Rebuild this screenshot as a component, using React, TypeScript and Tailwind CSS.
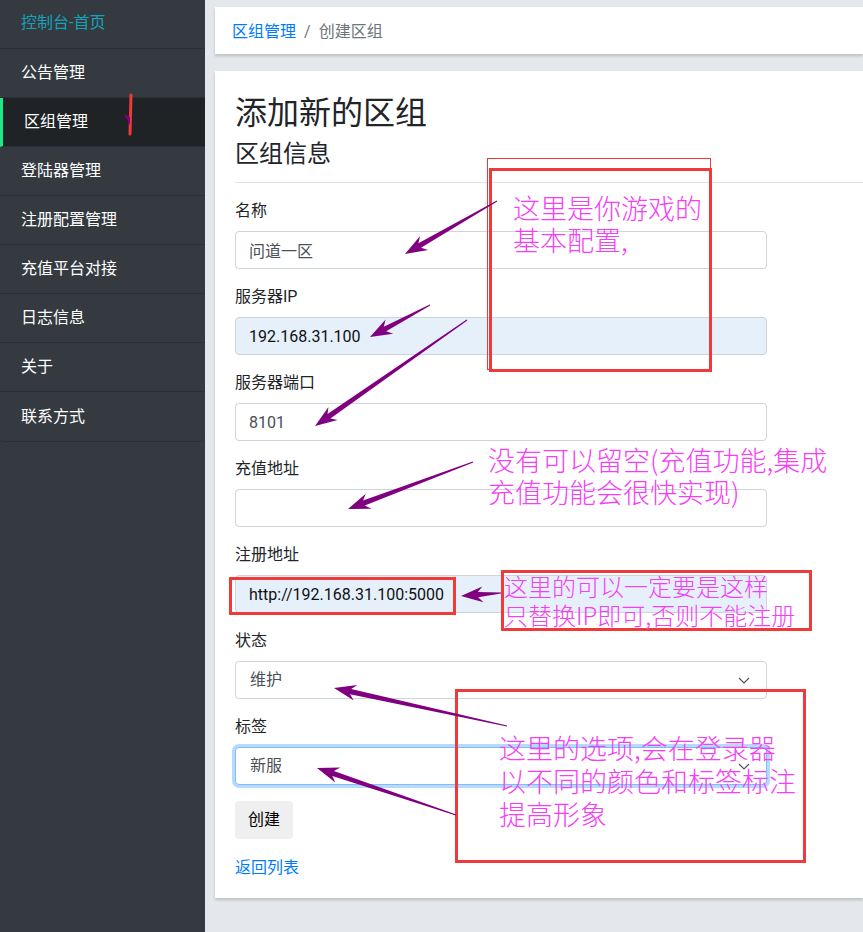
import React from 'react';

const navItems = ['公告管理', '区组管理', '登陆器管理', '注册配置管理', '充值平台对接', '日志信息', '关于', '联系方式'];

type Arrow = [number, number, number, number];

// tapered annotation arrows: tail -> tip
const arrows: Arrow[] = [
  [497, 201, 405, 254],
  [430, 305, 370, 337],
  [467, 320, 315, 426],
  [473, 462, 348, 509],
  [501, 593, 461, 596],
  [507, 726, 334, 688],
  [456, 815, 317, 768],
];

const arrowPoints = ([x1, y1, x2, y2]: Arrow, head = 22, hw = 8, bw = 2.6) => {
  const dx = x2 - x1;
  const dy = y2 - y1;
  const L = Math.hypot(dx, dy);
  const ux = dx / L;
  const uy = dy / L;
  const px = -uy;
  const py = ux;
  const h = Math.min(head, L * 0.6);
  const pt = (u: number, v: number) => `${(x1 + ux * u + px * v).toFixed(1)},${(y1 + uy * u + py * v).toFixed(1)}`;
  return [
    pt(0, 0.5),
    pt(L - h + 5, bw),
    pt(L - h, hw),
    pt(L, 0),
    pt(L - h, -hw),
    pt(L - h + 5, -bw),
    pt(0, -0.5),
  ].join(' ');
};

const Field: React.FC<{ label: string; value?: string; autofill?: boolean; dark?: boolean }> = ({ label, value = '', autofill, dark }) => (
  <div className="mb-4">
    <label className="block text-[16px] leading-[24px] text-[#212529] mb-2">{label}</label>
    <input
      readOnly
      value={value}
      className={`block w-[532px] h-[38px] rounded border border-[#ced4da] px-[13px] text-[16px] outline-none ${
        autofill ? 'bg-[#e5f0fb]' : 'bg-white'
      } ${dark ? 'text-[#111]' : 'text-[#495057]'}`}
    />
  </div>
);

const SelectField: React.FC<{ label: string; value: string; focused?: boolean }> = ({ label, value, focused }) => (
  <div className="mb-4">
    <label className="block text-[16px] leading-[24px] text-[#212529] mb-2">{label}</label>
    <div
      className={`relative flex items-center w-[532px] h-[38px] rounded border px-[14px] text-[16px] text-[#495057] bg-white ${
        focused ? 'border-[#80bdff] shadow-[0_0_0_3px_rgba(0,123,255,0.28)]' : 'border-[#ced4da]'
      }`}
    >
      {value}
      <svg className="absolute right-[16px] top-[15px]" width="12" height="7" viewBox="0 0 12 7">
        <polyline points="1,1 6,6 11,1" fill="none" stroke="#495057" strokeWidth="1.1" />
      </svg>
    </div>
  </div>
);

export default function App() {
  return (
    <div className="relative flex w-[863px] h-[932px] overflow-hidden font-['Segoe_UI','Roboto','Noto_Sans_CJK_SC',sans-serif]">
      {/* sidebar */}
      <aside className="w-[205px] shrink-0 bg-[#343a40]">
        <div className="rounded-b border-b border-[#2b3035]">
          <div className="h-[49px] flex items-center pl-[21px] pb-[3px] border-b border-[#2b3035] text-[16px] text-[#17a2b8]">控制台-首页</div>
          {navItems.map((item) => {
            const active = item === '区组管理';
            return (
              <div
                key={item}
                className={`h-[49px] flex items-center text-[16px] text-white border-b border-[#2b3035] last:border-b-0 ${
                  active ? 'bg-[#1f2326] border-l-[3px] border-l-[#19ec87] pl-[21px]' : 'pl-[21px]'
                }`}
              >
                {item}
              </div>
            );
          })}
        </div>
      </aside>

      {/* main */}
      <main className="flex-1 bg-[#e4e7eb] pl-[10px] pt-[7px]">
        <div className="h-[47px] bg-white flex items-center pl-[17px] pt-[3px] text-[16px] shadow-[0_2px_3px_rgba(0,0,0,0.18)]">
          <span className="text-[#007bff]">区组管理</span>
          <span className="text-[#6c757d] px-[8px]">/</span>
          <span className="text-[#6c757d]">创建区组</span>
        </div>

        <div className="mt-[17px] bg-white pl-[20px] pt-[23px] pb-[18px] shadow-[0_2px_3px_rgba(0,0,0,0.18)]">
          <h1 className="text-[32px] leading-[38px] text-[#212529]">添加新的区组</h1>
          <h2 className="mt-[8px] text-[24px] leading-[29px] text-[#212529]">区组信息</h2>
          <hr className="mt-[13px] mb-[16px] border-0 border-t border-[#e3e3e3]" />

          <Field label="名称" value="问道一区" />
          <Field label="服务器IP" value="192.168.31.100" autofill dark />
          <Field label="服务器端口" value="8101" />
          <Field label="充值地址" />
          <Field label="注册地址" value="http://192.168.31.100:5000" autofill dark />
          <SelectField label="状态" value="维护" />
          <SelectField label="标签" value="新服" focused />

          <button className="h-[38px] px-[13px] rounded bg-[#efefef] text-[16px] text-black">创建</button>
          <div className="mt-[17px] text-[16px] leading-[24px] text-[#007bff]">返回列表</div>
        </div>
      </main>

      {/* screenshot annotations */}
      <svg className="absolute inset-0 pointer-events-none" width="863" height="932" viewBox="0 0 863 932">
        <rect x="487.5" y="158.5" width="223" height="211" fill="none" stroke="#f03a3a" strokeWidth="1" />
        <rect x="490.5" y="169.5" width="220" height="201" fill="none" stroke="#f03a3a" strokeWidth="3" />
        <rect x="230.5" y="578.5" width="224" height="35" fill="none" stroke="#f03a3a" strokeWidth="3" />
        <rect x="502.5" y="571.5" width="308" height="58" fill="none" stroke="#f03a3a" strokeWidth="3" />
        <rect x="456.5" y="690.5" width="348" height="171" fill="none" stroke="#f03a3a" strokeWidth="3" />
        <line x1="131" y1="95" x2="130" y2="134" stroke="#f03a3a" strokeWidth="3" strokeLinecap="round" />
        <polygon points="124,114 130,117 130,125" fill="#800080" />
        {arrows.map((a, i) => (
          <polygon key={i} points={arrowPoints(a)} fill="#800080" />
        ))}
      </svg>

      <div className="absolute left-[513px] top-[192px] text-[27px] leading-[32px] font-light text-[#f53ef5] font-['Noto_Sans_CJK_SC',serif] pointer-events-none whitespace-nowrap">
        <div>这里是你游戏的</div>
        <div>基本配置,</div>
      </div>
      <div className="absolute left-[488px] top-[444px] text-[27px] leading-[32px] font-light text-[#f53ef5] font-['Noto_Sans_CJK_SC',serif] pointer-events-none whitespace-nowrap">
        <div>没有可以留空(充值功能,集成</div>
        <div>充值功能会很快实现)</div>
      </div>
      <div className="absolute left-[504px] top-[571px] text-[24px] leading-[29px] font-light text-[#f53ef5] font-['Noto_Sans_CJK_SC',serif] pointer-events-none whitespace-nowrap">
        <div>这里的可以一定要是这样</div>
        <div>只替换IP即可,否则不能注册</div>
      </div>
      <div className="absolute left-[499px] top-[731px] text-[27px] leading-[33px] font-light text-[#f53ef5] font-['Noto_Sans_CJK_SC',serif] pointer-events-none whitespace-nowrap">
        <div>这里的选项,会在登录器</div>
        <div>以不同的颜色和标签标注</div>
        <div>提高形象</div>
      </div>
    </div>
  );
}
